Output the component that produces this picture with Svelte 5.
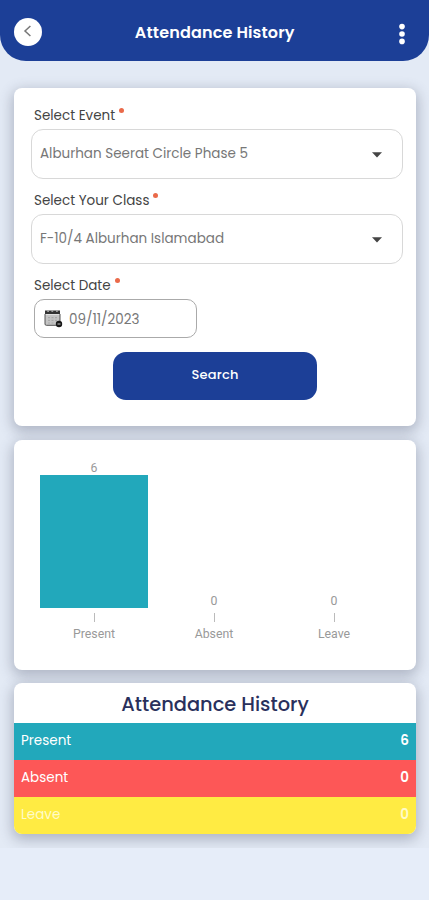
<script>
    let event = 'Alburhan Seerat Circle Phase 5';
    let className = 'F-10/4 Alburhan Islamabad';
    let date = '09/11/2023';

    const records = [
        { name: 'Present', count: 6 },
        { name: 'Absent', count: 0 },
        { name: 'Leave', count: 0 }
    ];

    const max = Math.max(...records.map((r) => r.count));
    const chartHeight = 133;
</script>

<div class="screen">
    <header>
        <button class="back" aria-label="Back">
            <svg width="28" height="28" viewBox="0 0 28 28">
                <path d="M16.4 8 L11 13 L16.4 18" fill="none" stroke="#777" stroke-width="1.5" />
            </svg>
        </button>
        <h1>Attendance History</h1>
        <button class="more" aria-label="More">
            <svg width="8" height="22" viewBox="0 0 8 22">
                <circle cx="4" cy="3.6" r="2.8" />
                <circle cx="4" cy="11" r="2.8" />
                <circle cx="4" cy="18.4" r="2.8" />
            </svg>
        </button>
    </header>

    <main>
        <section class="card form">
            <div class="label"><span>Select Event</span><i></i></div>
            <div class="select">
                <span>{event}</span>
                <svg width="10" height="6" viewBox="0 0 10 6"><path d="M0 0.3 H10 L5 5.6 Z" /></svg>
            </div>
            <div class="label"><span>Select Your Class</span><i></i></div>
            <div class="select">
                <span>{className}</span>
                <svg width="10" height="6" viewBox="0 0 10 6"><path d="M0 0.3 H10 L5 5.6 Z" /></svg>
            </div>
            <div class="label"><span>Select Date</span><i></i></div>
            <div class="date">
                <svg width="19" height="19" viewBox="0 0 19 19">
                    <path d="M1 5.5 V15 Q1 16.5 2.5 16.5 H13 L16 13 V5.5 Z" fill="#c4c4c4" />
                    <path d="M1 5 V15 Q1 16.3 2.4 16.3 H12 M16 5 V12" fill="none" stroke="#555" stroke-width="1" />
                    <path d="M4 8.6 H14 M4 11.4 H14 M4 14 H11" stroke="#a8a8a8" stroke-width="1.2" stroke-dasharray="2 1.5" />
                    <path d="M1 1.5 H16 V5 H1 Z" fill="#333" />
                    <path d="M3.2 2.2 H5 M7.4 2.2 H9.2 M12 2.2 H13.8" stroke="#ccc" stroke-width="1" />
                    <circle cx="15" cy="15" r="3.2" fill="#161616" />
                    <path d="M13.5 15 H16.5" stroke="#ddd" stroke-width="0.9" />
                </svg>
                <span>{date}</span>
            </div>
            <button class="search">Search</button>
        </section>

        <section class="card chart">
            {#each records as record}
                <div class="column">
                    <span class="value">{record.count}</span>
                    <div class="bar" style="height: {(record.count / max) * chartHeight}px"></div>
                    <div class="tick"></div>
                    <span class="name">{record.name}</span>
                </div>
            {/each}
        </section>

        <section class="card history">
            <h2>Attendance History</h2>
            {#each records as record}
                <div class="row {record.name.toLowerCase()}">
                    <span>{record.name}</span>
                    <b>{record.count}</b>
                </div>
            {/each}
        </section>
    </main>
</div>

<style>
    :global(body) {
        background: #e6edf9;
    }
    .screen {
        height: 848px;
        overflow: hidden;
        background: #e3eaf5;
        font-family: Poppins, Inter, sans-serif;
        font-size: 13.5px;
    }
    header {
        box-sizing: border-box;
        height: 61px;
        padding: 3px 23px 0 13.5px;
        display: grid;
        grid-template-columns: 28px 1fr 8px;
        align-items: center;
        background: #1c3f97;
        border-radius: 0 0 26px 26px;
    }
    h1 {
        margin: 2px 0 0;
        padding-right: 10px;
        color: #fff;
        font-size: 16px;
        font-weight: 600;
        line-height: 24px;
        letter-spacing: 0.15px;
        text-align: center;
    }
    button {
        border: 0;
        padding: 0;
        font-family: inherit;
    }
    .back {
        width: 28px;
        height: 28px;
        margin-top: -1px;
        border-radius: 50%;
        background: #fff;
    }
    .back svg, .more svg {
        display: block;
    }
    .more {
        margin-top: 3px;
        background: none;
        fill: #fff;
    }
    main {
        padding: 27px 13px 0 14px;
    }
    .card {
        box-sizing: border-box;
        background: #fff;
        border-radius: 8px;
        box-shadow: 0 4px 13px 2px rgba(70, 75, 100, 0.33);
    }
    .form {
        height: 338px;
        padding: 16px 13px 0 18px;
    }
    .label {
        display: flex;
        height: 20px;
        padding-left: 2px;
        color: #444;
        line-height: 23px;
    }
    .label i {
        width: 5px;
        height: 5px;
        margin: 4px 0 0 4px;
        border-radius: 50%;
        background: #ea6a4a;
    }
    .select {
        box-sizing: border-box;
        height: 50px;
        margin: 5px 0 10px -1px;
        padding: 0 20px 0 8px;
        display: flex;
        align-items: center;
        justify-content: space-between;
        border: 1px solid #d8d8d8;
        border-radius: 12px;
        color: #777;
        fill: #444;
    }
    .select svg {
        margin-top: 1px;
    }
    .date {
        box-sizing: border-box;
        width: 163px;
        height: 39px;
        margin: 5px 0 0 2px;
        padding-left: 9px;
        display: flex;
        align-items: center;
        gap: 6px;
        border: 1px solid #aaa;
        border-radius: 10px;
        color: #777;
    }
    .date span {
        margin-top: 2px;
    }
    .search {
        display: block;
        width: 204px;
        height: 48px;
        margin: 14px 0 0 81px;
        padding-bottom: 2px;
        border-radius: 13px;
        background: #1c3f97;
        color: #fff;
        font-size: 13px;
        font-weight: 500;
        letter-spacing: 0.2px;
    }
    .chart {
        height: 230px;
        margin-top: 14px;
        padding: 0 22px 28px 20px;
        display: grid;
        grid-template-columns: repeat(3, 120px);
        align-items: end;
        color: #999;
        font-family: Roboto, sans-serif;
        font-size: 12.3px;
    }
    .column {
        display: flex;
        flex-direction: column;
        align-items: center;
    }
    .value {
        line-height: 14px;
    }
    .bar {
        width: 108px;
        background: #22a8bb;
    }
    .tick {
        width: 1px;
        height: 9px;
        margin: 5px 0 4px;
        background: #bbb;
    }
    .name {
        line-height: 16px;
    }
    .history {
        height: 151px;
        margin-top: 13px;
        overflow: hidden;
    }
    h2 {
        margin: 0;
        height: 40px;
        color: #29305c;
        font-size: 19.4px;
        font-weight: 500;
        line-height: 43px;
        text-align: center;
    }
    .row {
        box-sizing: border-box;
        height: 37px;
        padding: 0 7px 1px;
        display: flex;
        align-items: center;
        justify-content: space-between;
        color: #fff;
    }
    .row b {
        font-weight: 600;
    }
    .present {
        background: #22a8bb;
    }
    .absent {
        background: #fd5757;
    }
    .leave {
        background: #ffeb43;
        color: #fffbc8;
    }
</style>
